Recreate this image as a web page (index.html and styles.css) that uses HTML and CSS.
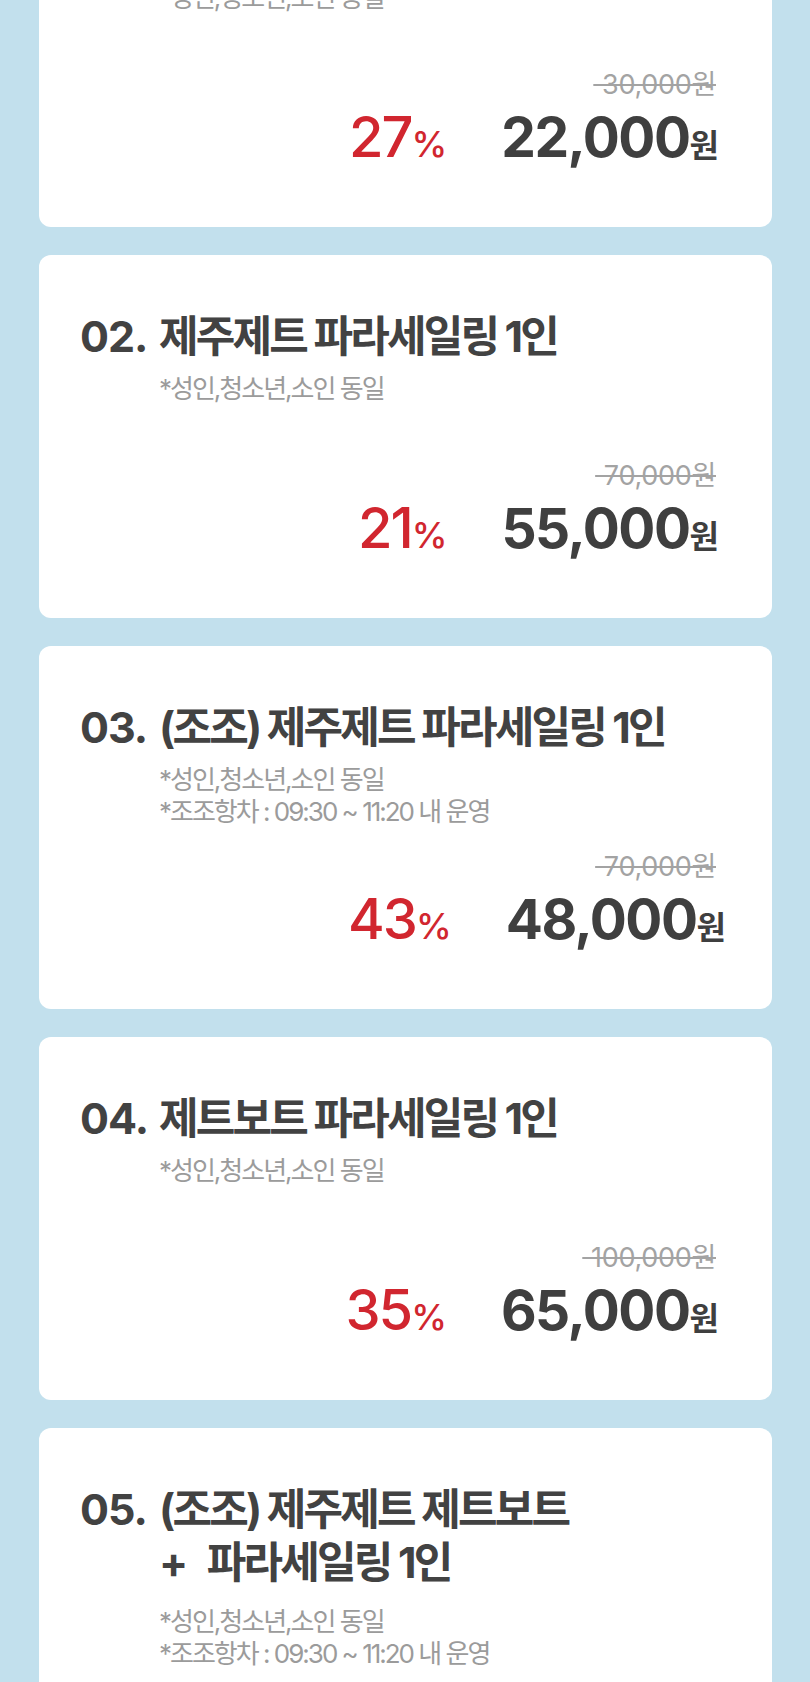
FILE: index.html
```html
<!DOCTYPE html>
<html lang="ko">
<head>
  <meta charset="UTF-8">
  <meta name="viewport" content="width=device-width, initial-scale=1.0">
  <title>제주제트 파라세일링 요금</title>
  <link rel="stylesheet" href="styles.css">
</head>
<body>
  <!-- 상품 목록 -->
  <div class="list">

    <div class="card">
      <div class="card-head">
        <span class="num">01.</span>
        <div class="info">
          <h2 class="title">제주제트 제트보트 1인</h2>
          <p class="note">*성인,청소년,소인 동일</p>
        </div>
      </div>
      <div class="price">
        <span class="price-old">&#8196;30,000원</span>
        <div class="price-row">
          <span class="rate">27<small>%</small></span>
          <span class="amount">22,000<small>원</small></span>
        </div>
      </div>
    </div>

    <div class="card">
      <div class="card-head">
        <span class="num">02.</span>
        <div class="info">
          <h2 class="title">제주제트 파라세일링 1인</h2>
          <p class="note">*성인,청소년,소인 동일</p>
        </div>
      </div>
      <div class="price">
        <span class="price-old">&#8196;70,000원</span>
        <div class="price-row">
          <span class="rate">21<small>%</small></span>
          <span class="amount">55,000<small>원</small></span>
        </div>
      </div>
    </div>

    <div class="card">
      <div class="card-head">
        <span class="num">03.</span>
        <div class="info">
          <h2 class="title">(조조) 제주제트 파라세일링 1인</h2>
          <p class="note">*성인,청소년,소인 동일<br>*조조항차 : 09:30 ~ 11:20 내 운영</p>
        </div>
      </div>
      <div class="price price-shift">
        <span class="price-old">&#8196;70,000원</span>
        <div class="price-row">
          <span class="rate">43<small>%</small></span>
          <span class="amount">48,000<small>원</small></span>
        </div>
      </div>
    </div>

    <div class="card">
      <div class="card-head">
        <span class="num">04.</span>
        <div class="info">
          <h2 class="title">제트보트 파라세일링 1인</h2>
          <p class="note">*성인,청소년,소인 동일</p>
        </div>
      </div>
      <div class="price">
        <span class="price-old">&#8196;100,000원</span>
        <div class="price-row">
          <span class="rate">35<small>%</small></span>
          <span class="amount">65,000<small>원</small></span>
        </div>
      </div>
    </div>

    <div class="card card-tall">
      <div class="card-head">
        <span class="num">05.</span>
        <div class="info">
          <h2 class="title">(조조) 제주제트 제트보트<br><span class="plus">+</span> 파라세일링 1인</h2>
          <p class="note note-wide">*성인,청소년,소인 동일<br>*조조항차 : 09:30 ~ 11:20 내 운영</p>
        </div>
      </div>
      <div class="price">
        <span class="price-old">&#8196;110,000원</span>
        <div class="price-row">
          <span class="rate">45<small>%</small></span>
          <span class="amount">60,000<small>원</small></span>
        </div>
      </div>
    </div>

  </div>
</body>
</html>
```

FILE: styles.css
```css
/* 기본 */
body {
  margin: 0;
  padding: 0;
  background-color: #c2e0ed;
  font-family: Inter, "Noto Sans CJK KR", sans-serif;
  overflow-x: hidden;
}

/* 목록 (스크롤된 상태 그대로) */
.list {
  margin: -136px 38px 0 39px;
  display: flex;
  flex-direction: column;
  gap: 28px;
}

/* 카드 */
.card {
  min-height: 363px;
  box-sizing: border-box;
  background-color: #ffffff;
  border-radius: 12px;
  padding: 55px 53px 48px 41px;
  display: flex;
  flex-direction: column;
}

.card-head {
  display: flex;
  align-items: flex-start;
}

.num {
  width: 79px;
  flex-shrink: 0;
  font-size: 43px;
  line-height: 52px;
  font-weight: 700;
  letter-spacing: -1px;
  color: #424242;
}

.info {
  flex: 1;
}

.title {
  margin: 0;
  font-size: 43px;
  line-height: 53px;
  font-weight: 700;
  letter-spacing: -2.8px;
  color: #424242;
}

.title .plus {
  margin-right: 14px;
}

.note {
  margin: 10px 0 0;
  font-size: 26px;
  line-height: 32px;
  letter-spacing: -2px;
  color: #9b9b9b;
}

/* 05번은 제목이 두 줄이라 간격이 조금 넓음 */
.note-wide {
  margin-top: 17px;
}

/* 가격 */
.price {
  margin-top: auto;
  padding-top: 6px;
  display: flex;
  flex-direction: column;
  align-items: flex-end;
}

.card-tall .price {
  padding-top: 40px;
}

.price-old {
  margin-right: 3px;
  font-size: 27px;
  line-height: 32px;
  letter-spacing: -0.3px;
  color: #a3a3a3;
  text-decoration: line-through;
  text-decoration-thickness: 2px;
}

.price-row {
  margin-top: 3px;
  display: flex;
  align-items: baseline;
  gap: 54px;
  line-height: 66px;
}

.rate {
  font-size: 56px;
  font-weight: 500;
  letter-spacing: -2px;
  color: #d1262f;
}

.rate small {
  font-size: 36px;
  letter-spacing: 0;
}

.amount {
  font-size: 55px;
  font-weight: 700;
  letter-spacing: -1.5px;
  color: #3f3f3f;
}

.amount small {
  font-size: 32px;
  letter-spacing: 0;
}

/* 03 카드는 원본에서 살짝 오른쪽 */
.price-shift .price-row {
  margin-right: -7px;
}
```
